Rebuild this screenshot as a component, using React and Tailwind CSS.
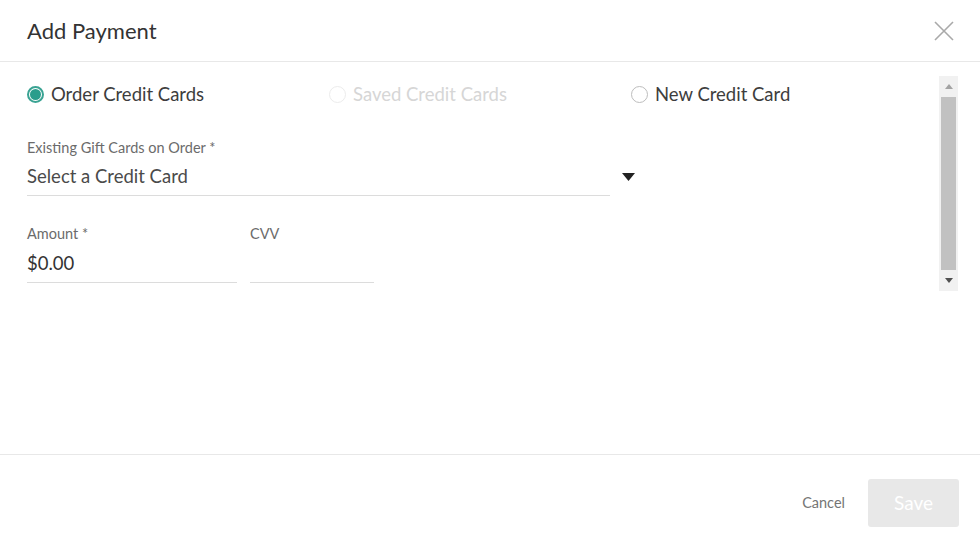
import React from "react";

const font = { fontFamily: '"Proxima Nova", Lato, "Open Sans", "Liberation Sans", sans-serif' };

function Radio({ state, label }) {
  return (
    <label className="flex items-center gap-[7px] w-[302px]">
      {state === "checked" ? (
        <span className="w-[17px] h-[17px] rounded-full border-[2px] border-[#3aa393] flex items-center justify-center">
          <span className="w-[11px] h-[11px] rounded-full bg-[#2a9d8c]" />
        </span>
      ) : state === "disabled" ? (
        <span className="w-[17px] h-[17px] rounded-full border border-[#ececec]" />
      ) : (
        <span className="w-[17px] h-[17px] rounded-full border-[1.5px] border-[#bdbdbd]" />
      )}
      <span
        className={
          "text-[18.5px] leading-none " +
          (state === "disabled" ? "text-[#d6d6d6]" : "text-[#3d3d3d]")
        }
      >
        {label}
      </span>
    </label>
  );
}

export default function App() {
  return (
    <div className="w-[980px] h-[541px] bg-white flex flex-col overflow-hidden" style={font}>
      <div className="h-[62px] flex items-center justify-between px-[27px] border-b border-[#e8e8e8] shrink-0">
        <h1 className="text-[22px] text-[#333333]">Add Payment</h1>
        <svg width="20" height="20" viewBox="0 0 20 20" className="mr-[-1px]">
          <path d="M1 1 L19 19 M19 1 L1 19" stroke="#a9a9a9" strokeWidth="1.6" />
        </svg>
      </div>
      <div className="flex-1 flex pt-[14px] pl-[27px] pr-[22px]">
        <div className="flex-1 pt-[9px]">
          <div className="flex">
            <Radio state="checked" label="Order Credit Cards" />
            <Radio state="disabled" label="Saved Credit Cards" />
            <Radio state="empty" label="New Credit Card" />
          </div>
          <div className="mt-[37px] flex items-end">
            <div className="w-[583px]">
              <div className="text-[14.5px] text-[#6b6b6b] leading-[13px]">Existing Gift Cards on Order *</div>
              <div className="text-[18.5px] text-[#4a4a4a] leading-none mt-[13px] pb-[10px] border-b border-[#dcdcdc]">
                Select a Credit Card
              </div>
            </div>
            <svg width="13" height="8" viewBox="0 0 13 8" className="ml-[12px] mb-[15px]">
              <path d="M0 0 H13 L6.5 8 Z" fill="#222" />
            </svg>
          </div>
          <div className="mt-[31px] flex gap-[13px]">
            <div className="w-[210px]">
              <div className="text-[14.5px] text-[#6b6b6b] leading-[13px]">Amount *</div>
              <div className="text-[18.5px] text-[#333] leading-none mt-[14px] pb-[9px] border-b border-[#dcdcdc]">$0.00</div>
            </div>
            <div className="w-[124px]">
              <div className="text-[14.5px] text-[#6b6b6b] leading-[13px]">CVV</div>
              <div className="text-[18.5px] leading-none mt-[14px] pb-[9px] border-b border-[#dcdcdc]">&nbsp;</div>
            </div>
          </div>
        </div>
        <div className="w-[19px] h-[215px] bg-[#f1f1f1] flex flex-col items-center">
          <div className="h-[21px] flex items-center justify-center">
            <svg width="8" height="5" viewBox="0 0 8 5"><path d="M0 5 L4 0 L8 5 Z" fill="#a3a3a3" /></svg>
          </div>
          <div className="w-[15px] flex-1 bg-[#c1c1c1]" />
          <div className="h-[21px] flex items-center justify-center">
            <svg width="8" height="5" viewBox="0 0 8 5"><path d="M0 0 L8 0 L4 5 Z" fill="#505050" /></svg>
          </div>
        </div>
      </div>
      <div className="h-[87px] border-t border-[#e8e8e8] flex items-start pt-[24px] justify-end pr-[21px] gap-[22px] shrink-0">
        <button className="text-[14.5px] text-[#757575] h-[48px] mr-[1px]">Cancel</button>
        <button className="w-[91px] h-[48px] bg-[#e8e8e8] rounded-[3px] text-white text-[19px]">Save</button>
      </div>
    </div>
  );
}
